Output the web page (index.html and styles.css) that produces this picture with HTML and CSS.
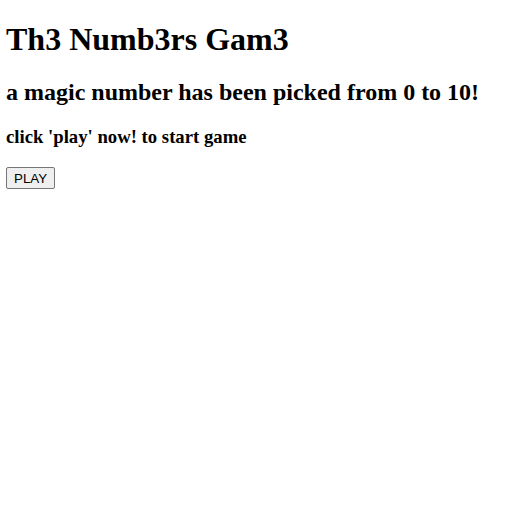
FILE: index.html
```html
<!DOCTYPE html>
<html>
<head>
<meta charset="utf-8">
<title>Th3 Numb3rs Gam3</title>
<link rel="stylesheet" href="styles.css">
</head>
<body class="page">
<h1 class="title">Th3 Numb3rs Gam3</h1>
<h2 class="subtitle">a magic number has been picked from 0 to 10!</h2>
<h3 class="hint">click 'play' now! to start game</h3>
<button class="play-btn">PLAY</button>
</body>
</html>
```
FILE: styles.css
```css
html { background: #fff; }
.page {
  margin: 6px;
  font-family: "Liberation Serif", "Times New Roman", serif;
  color: #000;
}
.title { font-size: 32px; margin: 14.5px 0 21.44px; font-weight: bold; }
.subtitle { font-size: 24px; margin: 19.92px 0; font-weight: bold; }
.hint { font-size: 18.72px; margin: 19.5px 0 18.72px; font-weight: bold; }
.play-btn {
  font-family: "Liberation Sans", Arial, sans-serif;
  font-size: 13.333px;
  padding: 3px 7px 2px;
  border: 1px solid #767676;
  border-radius: 2px;
  background: #efefef;
  color: #000;
}
```
